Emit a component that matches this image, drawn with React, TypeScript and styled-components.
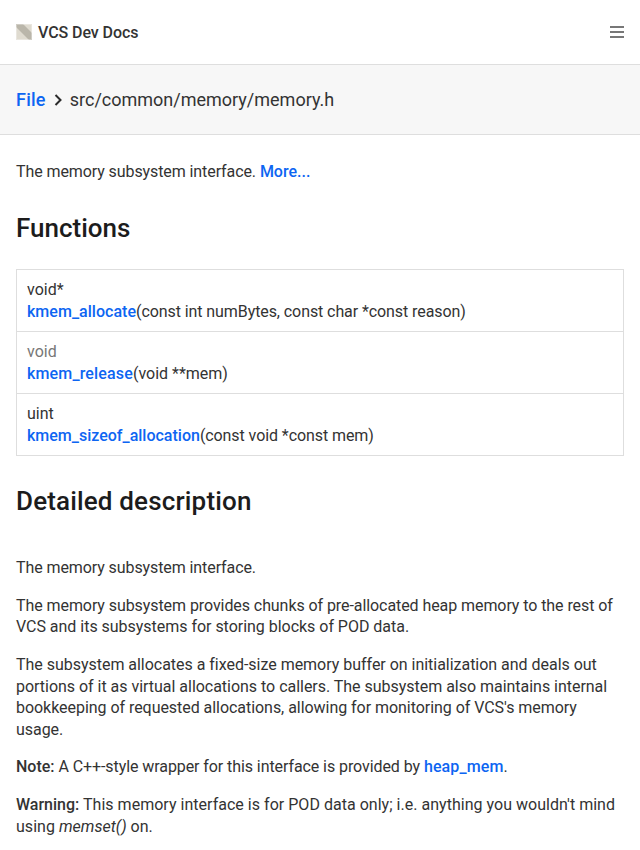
import React from "react";
import styled, { createGlobalStyle } from "styled-components";

const GlobalStyle = createGlobalStyle`
  html, body { margin: 0; padding: 0; background: #fff; overflow: hidden; }
  body { font-family: Roboto, sans-serif; font-size: 16px; line-height: 21.6px; color: #333; }
  * { box-sizing: border-box; }
`;

const Header = styled.header`
  height: 65px;
  padding: 0 16px;
  display: flex;
  align-items: center;
  justify-content: space-between;
  border-bottom: 1px solid #dedede;
`;

const Brand = styled.div`
  display: flex;
  align-items: center;
  gap: 6px;
  font-weight: 500;
  letter-spacing: -0.08px;
`;

const BrandName = styled.span`
  padding-top: 1px;
`;

const Breadcrumb = styled.nav`
  height: 70px;
  padding: 0 16px;
  display: flex;
  align-items: center;
  background: #f7f7f7;
  border-bottom: 1px solid #dedede;
  font-size: 18px;
`;

const Chevron = styled.svg`
  margin: 0 8px;
`;

const Text = styled.span<{ $tracking?: number }>`
  letter-spacing: ${(p) => p.$tracking ?? 0}px;
`;

const Link = styled.a<{ $tracking?: number }>`
  color: #0d65f2;
  font-weight: 500;
  text-decoration: none;
  letter-spacing: ${(p) => p.$tracking ?? 0}px;
`;

const Content = styled.main`
  padding: 26px 16px 0;
`;

const Paragraph = styled.p`
  margin: 0 0 16px;
`;

const Summary = styled.div``;

const Heading = styled.h1<{ $tracking?: number }>`
  margin: 26px 0 22px;
  font-size: 26px;
  line-height: 38px;
  font-weight: 500;
  color: #1c1c1c;
  letter-spacing: ${(p) => p.$tracking ?? 0}px;
`;

const Description = styled.section`
  padding-top: 15.6px;
`;

const FunctionList = styled.div`
  border: 1px solid #dedede;
`;

const FunctionRow = styled.div`
  height: 62px;
  padding: 9px 10px 0;
  line-height: 22px;
  &:first-child { height: 61px; }
  & + & { border-top: 1px solid #dedede; }
`;

const ReturnType = styled.div<{ $muted?: boolean }>`
  color: ${(p) => (p.$muted ? "#777" : "inherit")};
`;

const Strong = styled.strong`
  font-weight: 500;
`;

const functions = [
  { type: "void*", name: "kmem_allocate", args: "(const int numBytes, const char *const reason)", nameTracking: 0.03, argsTracking: -0.085 },
  { type: "void", name: "kmem_release", args: "(void **mem)", nameTracking: 0.15, argsTracking: 0 },
  { type: "uint", name: "kmem_sizeof_allocation", args: "(const void *const mem)", nameTracking: 0, argsTracking: -0.08 },
];

export default function App() {
  return (
    <>
      <GlobalStyle />
      <Header>
        <Brand>
          <svg width="16" height="16" viewBox="0 0 16 16">
            <rect width="16" height="16" fill="#dfdbd0" />
            <path d="M0 0H7L16 9V16H13L0 3Z" fill="#bab6aa" />
            <rect x="0.5" y="0.5" width="15" height="15" fill="none" stroke="#fff" strokeOpacity="0.65" strokeDasharray="1 1" />
          </svg>
          <BrandName>VCS Dev Docs</BrandName>
        </Brand>
        <svg width="14" height="14" viewBox="0 0 14 14">
          <path d="M0 2H14M0 7H14M0 12H14" stroke="#777" strokeWidth="2" />
        </svg>
      </Header>
      <Breadcrumb>
        <Link $tracking={0.25}>File</Link>
        <Chevron width="8" height="12" viewBox="0 0 8 12">
          <path d="M1.5 1L6.5 6L1.5 11" fill="none" stroke="#2b2b2b" strokeWidth="2" />
        </Chevron>
        src/common/memory/memory.h
      </Breadcrumb>
      <Content>
        <Summary><Text $tracking={-0.09}>The memory subsystem interface. </Text><Link>More...</Link></Summary>
        <Heading>Functions</Heading>
        <FunctionList>
          {functions.map((f) => (
            <FunctionRow key={f.name}>
              <ReturnType $muted={f.type === "void"}>{f.type}</ReturnType>
              <Link $tracking={f.nameTracking}>{f.name}</Link>
              <Text $tracking={f.argsTracking}>{f.args}</Text>
            </FunctionRow>
          ))}
        </FunctionList>
        <Heading $tracking={0.16}>Detailed description</Heading>
        <Description>
          <Paragraph><Text $tracking={-0.09}>The memory subsystem interface.</Text></Paragraph>
          <Paragraph>
            <Text $tracking={-0.075}>The memory subsystem provides chunks of pre-allocated heap memory to the rest of </Text>
            <Text $tracking={-0.025}>VCS and its subsystems for storing blocks of POD data.</Text>
          </Paragraph>
          <Paragraph>
            <Text $tracking={-0.025}>The subsystem allocates a fixed-size memory buffer on initialization and deals out portions of it as virtual allocations to callers. The subsystem also maintains internal </Text>
            <Text $tracking={-0.045}>bookkeeping of requested allocations, allowing for monitoring of VCS's memory usage.</Text>
          </Paragraph>
          <Paragraph>
            <Strong>Note:</Strong><Text $tracking={-0.08}> A C++-style wrapper for this interface is provided by </Text><Link $tracking={0.12}>heap_mem</Link>.
          </Paragraph>
          <Paragraph>
            <Strong>Warning:</Strong><Text $tracking={0.025}> This memory interface is for POD data only; i.e. anything you wouldn't mind using <em>memset()</em> on.</Text>
          </Paragraph>
        </Description>
      </Content>
    </>
  );
}
